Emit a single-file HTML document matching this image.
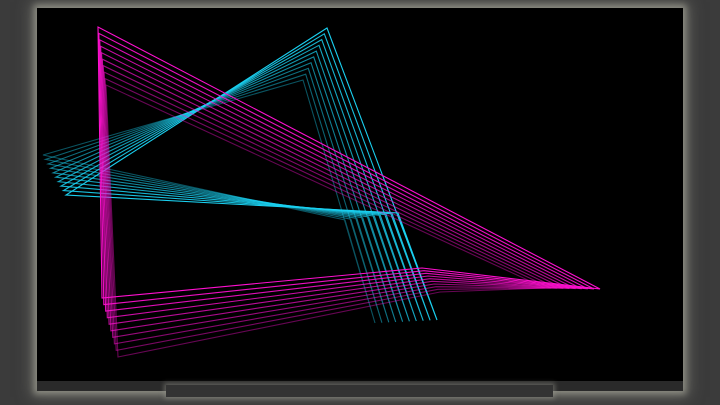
<!DOCTYPE html>
<html><head><meta charset="utf-8"><style>
html,body{margin:0;padding:0;background:#3b3b3b;width:720px;height:405px;overflow:hidden}
#f{position:absolute;left:37px;top:8px;width:646px;height:383px;background:#2a2a2a;box-shadow:0 0 6px 3px #8a8a80,0 0 14px 6px rgba(140,140,130,.5)}
#s{position:absolute;left:37px;top:8px;width:646px;height:373px;background:#000}
#st{position:absolute;left:166px;top:385px;width:387px;height:12px;background:#333;box-shadow:0 0 5px 2px rgba(150,150,140,.5)}
svg{position:absolute;left:0;top:0}
</style></head><body>
<div id="f"></div><div id="s"></div><div id="st"></div>
<svg id="g" width="720" height="405"></svg>
<script>
var g=document.getElementById('g');var h='';
function fam(a,b,col){var n=10;for(var i=n-1;i>=0;i--){var t=i/(n-1);var p=a.map(function(q,k){return [(q[0]+(b[k][0]-q[0])*t).toFixed(1),(q[1]+(b[k][1]-q[1])*t).toFixed(1)].join(',')}).join(' ');
h+='<polygon points="'+p+'" fill="none" stroke="'+col+'" stroke-width="1.1" stroke-opacity="'+(1-0.6*t).toFixed(2)+'"/>';}}
fam([[327,28],[66,195],[398,213],[437,320]],[[303,80],[43,155],[345,220],[375,323]],'#1ad0f0');
fam([[98,27],[102,298],[422,268],[600,289]],[[106,85],[118,357],[440,292],[545,288]],'#ff10d0');
g.innerHTML=h;
</script>
</body></html>
